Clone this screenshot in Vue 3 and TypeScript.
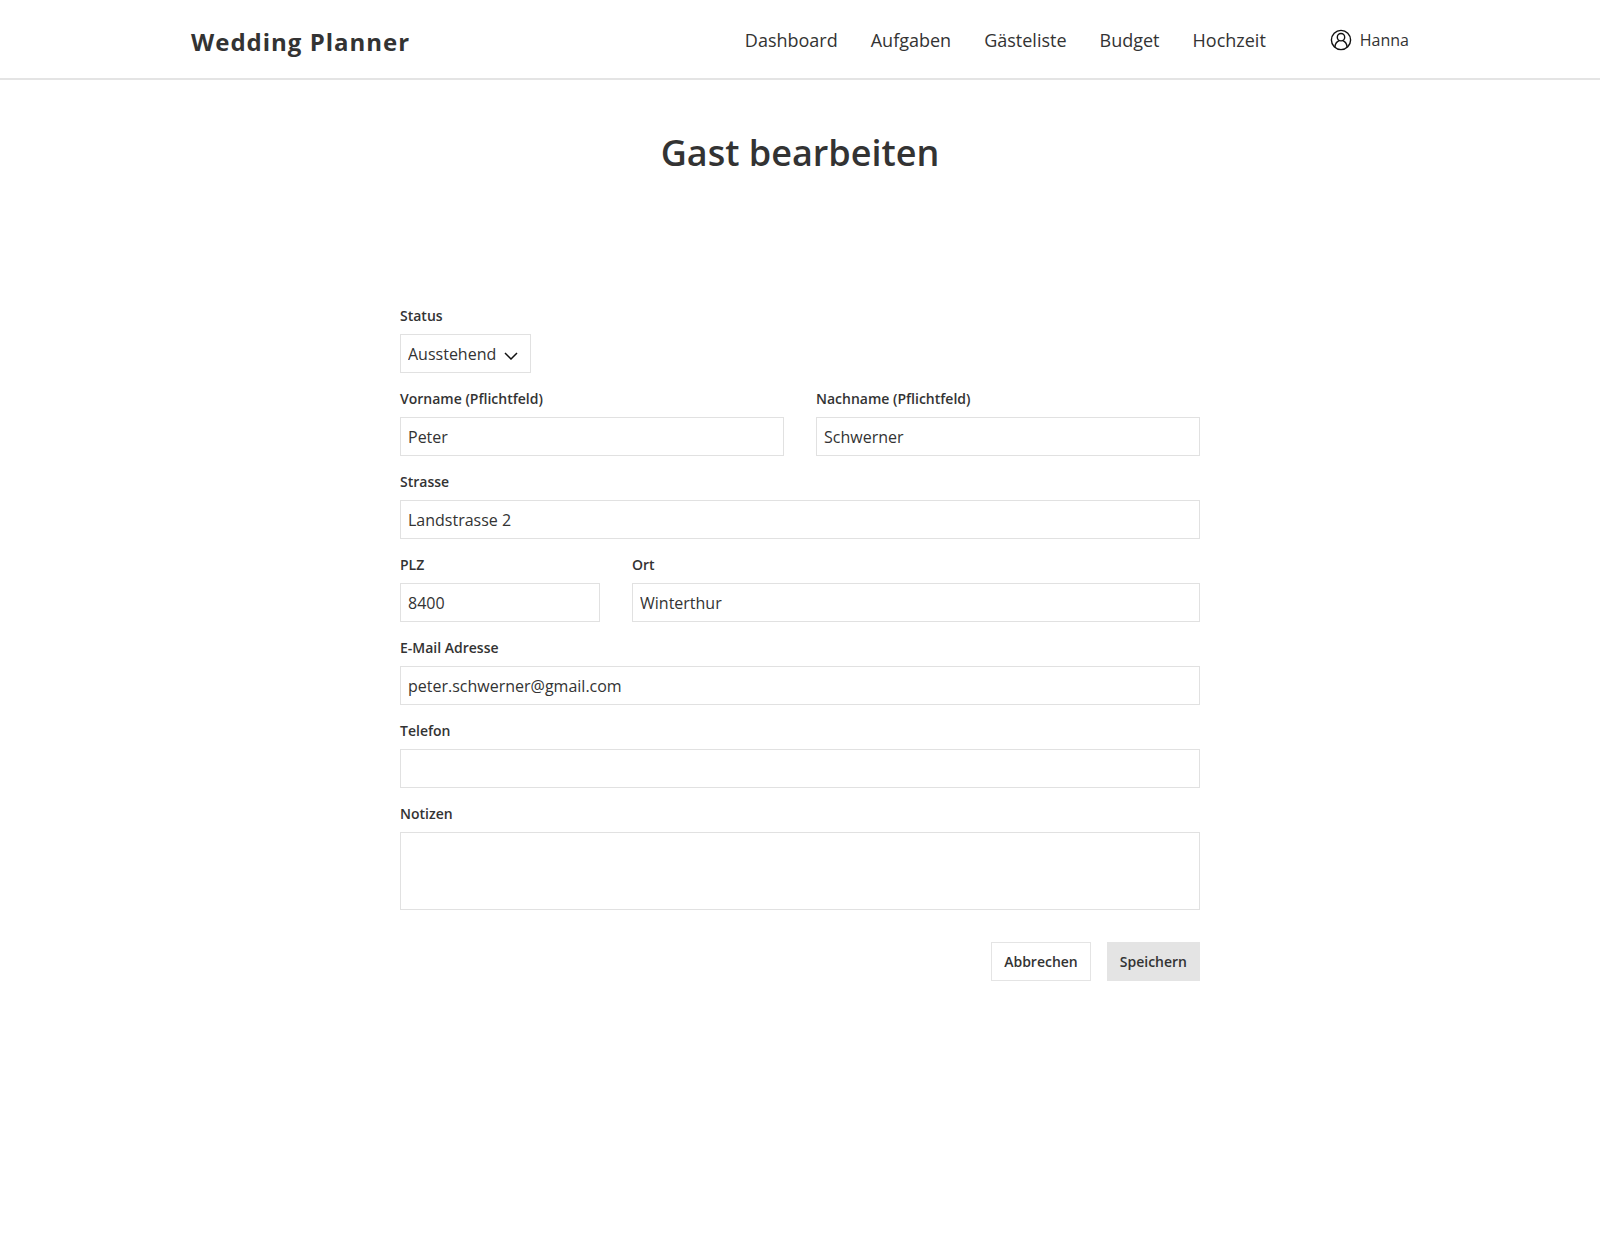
<script setup lang="ts">
import { reactive, ref } from 'vue'

interface Guest {
  status: string
  firstName: string
  lastName: string
  street: string
  zip: string
  city: string
  email: string
  phone: string
  notes: string
}

const navItems: string[] = ['Dashboard', 'Aufgaben', 'Gästeliste', 'Budget', 'Hochzeit']
const statusOptions: string[] = ['Ausstehend']
const userName = ref('Hanna')

const guest = reactive<Guest>({
  status: 'Ausstehend',
  firstName: 'Peter',
  lastName: 'Schwerner',
  street: 'Landstrasse 2',
  zip: '8400',
  city: 'Winterthur',
  email: 'peter.schwerner@gmail.com',
  phone: '',
  notes: '',
})
</script>

<template>
  <header class="header">
    <div class="header-inner">
      <a class="logo" href="#">Wedding Planner</a>
      <nav class="nav">
        <a v-for="item in navItems" :key="item" class="nav-link" href="#">{{ item }}</a>
      </nav>
      <a class="user" href="#">
        <svg class="user-icon" viewBox="0 0 22 22" aria-hidden="true">
          <circle cx="11" cy="11" r="9.6" />
          <circle cx="11" cy="8.2" r="3.7" />
          <path d="M4.9 18.2c.3-3.4 2-5.600 4.300-6.500M17.100 18.200c-.3-3.400-2-5.600-4.300-6.500" />
        </svg>
        <span>{{ userName }}</span>
      </a>
    </div>
  </header>

  <main class="main">
    <h1 class="title">Gast bearbeiten</h1>

    <form class="form" @submit.prevent>
      <div class="field">
        <label for="status">Status</label>
        <div class="select-wrap">
          <select id="status" v-model="guest.status" class="control select">
            <option v-for="option in statusOptions" :key="option">{{ option }}</option>
          </select>
          <svg class="chevron" viewBox="0 0 14 8" aria-hidden="true">
            <path d="M1 1l6 6 6-6" />
          </svg>
        </div>
      </div>

      <div class="row">
        <div class="field">
          <label for="first-name">Vorname (Pflichtfeld)</label>
          <input id="first-name" v-model="guest.firstName" class="control" type="text" />
        </div>
        <div class="field">
          <label for="last-name">Nachname (Pflichtfeld)</label>
          <input id="last-name" v-model="guest.lastName" class="control" type="text" />
        </div>
      </div>

      <div class="field">
        <label for="street">Strasse</label>
        <input id="street" v-model="guest.street" class="control" type="text" />
      </div>

      <div class="row row-city">
        <div class="field">
          <label for="zip">PLZ</label>
          <input id="zip" v-model="guest.zip" class="control" type="text" />
        </div>
        <div class="field">
          <label for="city">Ort</label>
          <input id="city" v-model="guest.city" class="control" type="text" />
        </div>
      </div>

      <div class="field">
        <label for="email">E-Mail Adresse</label>
        <input id="email" v-model="guest.email" class="control" type="email" />
      </div>

      <div class="field">
        <label for="phone">Telefon</label>
        <input id="phone" v-model="guest.phone" class="control" type="tel" />
      </div>

      <div class="field">
        <label for="notes">Notizen</label>
        <textarea id="notes" v-model="guest.notes" class="control notes"></textarea>
      </div>

      <div class="actions">
        <button class="button" type="button">Abbrechen</button>
        <button class="button button-primary" type="submit">Speichern</button>
      </div>
    </form>
  </main>
</template>

<style>
body {
  margin: 0;
  background: #fff;
  color: #333;
  font-family: 'Open Sans', 'Noto Sans', sans-serif;
  font-size: 16px;
}
</style>

<style scoped>
*,
*::before,
*::after {
  box-sizing: border-box;
}

a {
  color: inherit;
  text-decoration: none;
}

.header {
  border-bottom: 2px solid #e4e4e4;
}

.header-inner {
  display: flex;
  align-items: center;
  max-width: 1282px;
  margin: 0 auto;
  padding: 22px 32px 20px;
}

.logo {
  margin-right: auto;
  padding-top: 4px;
  font-size: 24px;
  font-weight: 700;
  line-height: 32px;
  letter-spacing: 1px;
}

.nav {
  display: flex;
  gap: 33px;
  margin-right: 64px;
  font-size: 18px;
  line-height: 24px;
}

.user {
  display: flex;
  align-items: center;
  gap: 8px;
  line-height: 24px;
}

.user-icon {
  width: 22px;
  height: 22px;
  fill: none;
  stroke: #111;
  stroke-width: 1.4;
}

.main {
  padding: 48px 32px 64px;
}

.title {
  margin: 0 0 128px;
  font-size: 36px;
  font-weight: 600;
  line-height: 50px;
  text-align: center;
}

.form {
  display: flex;
  flex-direction: column;
  gap: 16px;
  max-width: 800px;
  margin: 0 auto;
}

.row {
  display: grid;
  grid-template-columns: 1fr 1fr;
  gap: 32px;
}

.row-city {
  grid-template-columns: 200px 1fr;
}

.field {
  display: flex;
  flex-direction: column;
  gap: 8px;
  min-width: 0;
}

label {
  font-size: 14px;
  font-weight: 600;
  line-height: 20px;
}

.control {
  width: 100%;
  height: 39px;
  margin: 0;
  padding: 0 7px;
  border: 1px solid #e1e1e1;
  border-radius: 0;
  background: #fff;
  color: inherit;
  font: inherit;
  outline: none;
}

.select-wrap {
  position: relative;
  align-self: flex-start;
}

.select {
  display: block;
  width: auto;
  padding-right: 33px;
  appearance: none;
}

.chevron {
  position: absolute;
  top: 18px;
  right: 13px;
  width: 14px;
  height: 8px;
  fill: none;
  stroke: #111;
  stroke-width: 1.5;
  pointer-events: none;
}

.notes {
  display: block;
  height: 78px;
  padding: 7px;
  resize: none;
}

.actions {
  display: flex;
  justify-content: flex-end;
  gap: 16px;
  margin-top: 16px;
}

.button {
  height: 39px;
  padding: 0 12px;
  border: 1px solid #e4e4e4;
  background: #fff;
  color: inherit;
  font-family: inherit;
  font-size: 14px;
  font-weight: 600;
  line-height: 20px;
  cursor: pointer;
}

.button-primary {
  background: #e4e4e4;
}
</style>
